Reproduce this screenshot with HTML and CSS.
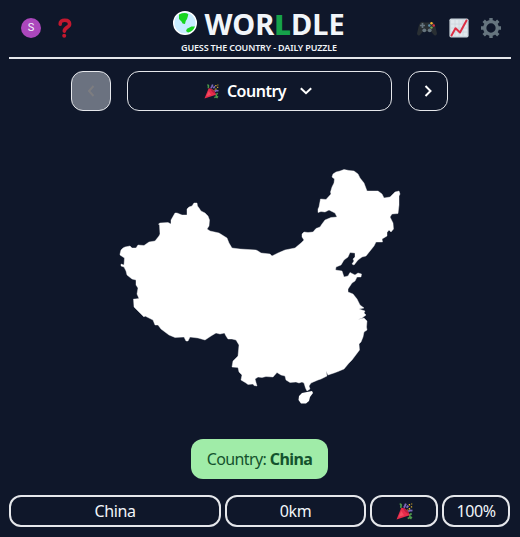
FILE: index.html
```html
<!DOCTYPE html>
<html lang="en">
<head>
<meta charset="utf-8">
<title>Worldle</title>
<link rel="stylesheet" href="styles.css">
</head>
<body>
<svg width="0" height="0" class="defs">
  <symbol id="party" viewBox="0 0 16 16">
    <path d="M3.500 1c2.500 0 .5 2 1.300 3.500M11 14.500l2.300-1-.5-2.500 2-1M13.500 15l1.300-2" fill="none" stroke="#4d984b" stroke-width="1.600"/>
    <path d="M7.500 4.500l1-2 .8-2M11.500 8l1.500-1 2.500.2M10 4.500l1.500-2" fill="none" stroke="#7d68ba" stroke-width="1.800"/>
    <path d="M0.500 15.500L5 4.500C9 4.500 12 8 12.800 11.500Z" fill="#e52c4c"/>
    <path d="M6.500 4.800C9 5 11.500 8 12 10.500C9.500 9.500 7.500 7.500 6.500 4.800Z" fill="#b91f40"/>
    <path d="M2.500 13L5 7.500L7.500 11.500Z" fill="#f24b60"/>
    <path d="M12 1h1.300v1.300H12zM14 3h1.200v1.200H14zM12 4.800h1.300V6H12zM14.300.5h1v1h-1zM10.500 6h1v1h-1z" fill="#e5b72e"/>
  </symbol>
</svg>
<header class="header">
  <div class="side">
    <span class="avatar">S</span>
    <svg class="question" width="14" height="20" viewBox="0 0 14 20"><path d="M2.200 6.200C2 3.500 4 2.200 6.800 2.200C9.800 2.200 11.600 3.600 11.600 6C11.600 9.800 6.500 9 6.300 13.200" fill="none" stroke="#c4182f" stroke-width="3.600" stroke-linecap="round"/><circle cx="6.200" cy="17.800" r="2" fill="#c4182f"/></svg>
  </div>
  <div class="brand">
    <h1 class="title">
      <svg width="24" height="24" viewBox="0 0 24 24"><circle cx="12" cy="12" r="11.300" fill="#c8ecff" stroke="#fff" stroke-width="1.400"/><path d="M6 3.500Q12 .8 15.300 3.200L14.800 5.500L14 8L12.700 10L12 13L9.600 12.500L8.500 10.500L6 8Z" fill="#18d51f"/><path d="M14 17.800L18.500 15.500L22 15.500Q20 20.500 15 21.500L13 20Z" fill="#18d51f"/></svg>
      <span class="word">WOR<b>L</b>DLE</span>
    </h1>
    <p class="tagline">GUESS THE COUNTRY - DAILY PUZZLE</p>
  </div>
  <div class="side tools">
    <svg width="20" height="20" viewBox="0 0 20 20"><path d="M4.500 4Q6 3.200 7.500 4.500H12.500Q14 3.200 15.500 4Q17.500 4.800 18.500 9L20 15.500Q19.500 18.500 17 17L14 13.500H6L3 17Q.5 18.500 0 15.500L1.500 9Q2.500 4.800 4.500 4Z" fill="#292f33"/><path d="M5.500 5v5M3 7.500h5" stroke="#66757f" stroke-width="1.700"/><circle cx="7.300" cy="12.300" r="1.900" fill="#66757f"/><circle cx="12.700" cy="12.300" r="1.900" fill="#66757f"/><circle cx="14.500" cy="5.300" r="1.200" fill="#f4b62e"/><circle cx="16.700" cy="7.500" r="1.200" fill="#db3040"/><circle cx="12.300" cy="7.500" r="1.200" fill="#5c91ae"/><circle cx="14.500" cy="9.600" r="1.200" fill="#77ac54"/></svg>
    <svg width="20" height="20" viewBox="0 0 20 20"><rect x=".4" y=".4" width="19.200" height="19.200" rx="1.800" fill="#ccd6dd"/><path d="M2 2h16v16H2z" fill="#e1e8ed"/><path d="M6 2v16M10 2v16M14 2v16M2 6h16M2 10h16M2 14h16" stroke="#ccd6dd" stroke-width=".8"/><path d="M2.500 17.500L6.500 10.300L11 14.500L17.500 2.500" fill="none" stroke="#dd2e44" stroke-width="2" stroke-linecap="round" stroke-linejoin="round"/></svg>
    <svg width="20" height="20" viewBox="0 0 20 20"><circle cx="10" cy="10" r="6.300" fill="none" stroke="#66757f" stroke-width="3.300"/><path d="M10 0v3.500M10 16.500V20M0 10h3.500M16.500 10H20M2.700 2.700l2.500 2.500M14.800 14.800l2.500 2.500M2.700 17.300l2.500-2.500M14.800 5.200l2.500-2.500" stroke="#66757f" stroke-width="3.400"/></svg>
  </div>
</header>
<nav class="rounds">
  <button class="step off"><svg width="8" height="12" viewBox="0 0 8 12"><path d="M6.500 1L2 6L6.500 11"/></svg></button>
  <button class="picker"><svg class="emoji" width="15" height="15"><use href="#party"/></svg><span class="picker-label">Country</span><svg width="12" height="8" viewBox="0 0 12 8"><path d="M.8 1.200L6 6.200L11.200 1.200"/></svg></button>
  <button class="step"><svg width="8" height="12" viewBox="0 0 8 12"><path d="M1.500 1L6.500 6L1.500 11"/></svg></button>
</nav>
<main class="map">
  <svg width="300" height="250" viewBox="110 160 300 250" fill="#fff">
    <path d="M120 254L121 250L123 248L125 247L130 246L132 248L136 248L138 245L144 245.500L149 242L155 241L159 236L160 234L159.500 225L158.500 224L160 223L168 222.500L171 224L171 220L175 213L177 213L182 215L187 215L187 209L189 207L192 206L194 203L197 203L197.500 206L199 208L201 211L205 213L208 216L209.500 220L209 226L207 229L210 231L219 233L227 238L229 243L232 248L240 249L256 250L258 251L261 253L270 254L272 256L278 253L285 250L295 248L301 243L304 240L302 237L302 234L304 232L308 232.500L313 232L316 228.500L320 227L322 224L325 220L331 217.500L337 217L335 213L329 210L325 212L321 211.500L318 212.500L318 209L319 207L320.500 199L326 199.500L331 194L330.500 192L332 187L334 183L334.500 179L332 177L333 174L336 172L340 171L344 169.500L349 170.500L354 171L358 174L360 178L364 183L367 191L378 191L382 194L384 198L390 197L395 192L399 191L400 194L399 196L399 205L398 213.500L392 214L390 217L393 223L393.500 229L391 232L389 230L387 232.500L387 236L382 239L382.500 242L376 242L374 246L366 256L362 257L358 260L354 265L352 264L354 261L353 259L355 257L355 253L350 252.500L348 257L344 260L341 265L336 267L335.500 270L342 271L344 277L348 276L350 272.500L355 275L358 273L361.500 274L361 277L357 277L355 281L352 283L348 289L348 292L353 294L357 299L360 305L364 308L359 309L365 311L364 313L366 315L362 318L358 319.500L364 318L367 321L366.500 327L367 330L364 332L363 337L361 342L359 344L359.500 350L355 356L352 360L349 363L344 369L338 371.500L334 373L328 375L326 371L327 376L321 379L318 380L311 383L309 386L310 389L307 391L305.500 388L304 383L302 382L299 383L296 382L290 382.500L286 380L285 376L281 375L277 372.500L273 377L266 376.500L262 377.500L258 377L255 379L257 386L254 385.500L253 384L248 384.500L246 383L241 380L242 375L239 372L238 367.500L232 367L233 361L238 356L239 345L236 340L232 339L228 339L226 336L224.500 333L220 334L216 333L211 336L205 340L198 338L190 337L188 341L186 341L184 337L175 337.500L169 335L161 329L158 325L155 325L153 320L149 318L145 316L144 317L140 313L134 307L133.500 299L135 299L139 298.500L137 294L138 288L136 285L136 280L132 279L127 275L126 271L124 267L121 266L121 264L124 265L124.500 258L120 255Z" stroke="#fff" stroke-width=".4"/>
    <path d="M299 396L302 393L307 392L312 391L313 393L310 397L309 401L306 403.500L301 403.500L298.500 400Z"/>
  </svg>
</main>
<div class="answer"><span class="answer-label">Country:</span> <strong>China</strong></div>
<section class="guess">
  <div>China</div>
  <div>0km</div>
  <div><svg width="17" height="17"><use href="#party"/></svg></div>
  <div class="percent">100%</div>
</section>
</body>
</html>
```
FILE: styles.css
```css
* { box-sizing: border-box; }
body {
  margin: 0;
  padding: 0 9px;
  height: 537px;
  overflow: hidden;
  background: #0f172a;
  color: #f1f5f9;
  font: 16px/24px "Noto Sans", "Open Sans", sans-serif;
  display: flex;
  flex-direction: column;
}
svg { display: block; flex: none; }
.defs { position: absolute; }
.header {
  height: 59px;
  border-bottom: 2px solid #e5e7eb;
  display: grid;
  grid-template-columns: 100px 1fr 100px;
}
.side { display: flex; align-items: center; padding: 0 0 1px 12px; gap: 17px; }
.avatar {
  width: 20px;
  height: 20px;
  border-radius: 50%;
  background: #ab47bc;
  font: 11px/20px Roboto, sans-serif;
  text-align: center;
}
.tools { padding: 0 10px 1px 0; gap: 12px; justify-content: flex-end; }
.brand { display: flex; flex-direction: column; align-items: center; padding-right: 2px; }
.title {
  margin: 5px 0 0;
  height: 37px;
  display: flex;
  align-items: center;
  gap: 8px;
  font-size: 29px;
  line-height: 37px;
  font-weight: 700;
}
.title svg { margin-bottom: 1px; }
.word { width: 141px; white-space: nowrap; letter-spacing: 0; }
.word b { color: #16a34a; }
.tagline {
  margin: 0;
  font-size: 9px;
  line-height: 12px;
  font-weight: 600;
  letter-spacing: -.16px;
  white-space: nowrap;
}
.rounds {
  display: flex;
  gap: 16px;
  margin: 12px 0 0 62px;
}
.rounds button {
  height: 40px;
  padding: 0;
  border: 1px solid #e5e7eb;
  border-radius: 12px;
  background: transparent;
  color: #fff;
  font: inherit;
  font-weight: 600;
  display: flex;
  align-items: center;
  justify-content: center;
}
.rounds path { fill: none; stroke: #fff; stroke-width: 2; }
.rounds .step { width: 40px; }
.rounds .off { background: #6b7280; }
.rounds .off path { stroke: #7d7d80; }
.rounds .picker { width: 265px; padding-right: 3px; }
.picker-label { margin: 0 14px 0 8px; letter-spacing: -.5px; }
.map { margin: 49px 0 0 101px; height: 250px; }
.answer {
  align-self: center;
  width: 137px;
  height: 40px;
  margin: 29px 0 0 -1px;
  border-radius: 12px;
  background: #a0eca8;
  color: #14532d;
  line-height: 40px;
  text-align: center;
  white-space: nowrap;
  letter-spacing: -.6px;
}
.guess {
  display: grid;
  grid-template-columns: 212px 141px 68px 68px;
  gap: 4px;
  margin-top: 16px;
}
.guess > div {
  height: 32px;
  border: 2px solid #e5e7eb;
  border-radius: 12px;
  display: flex;
  align-items: center;
  justify-content: center;
  letter-spacing: -.4px;
}
```
